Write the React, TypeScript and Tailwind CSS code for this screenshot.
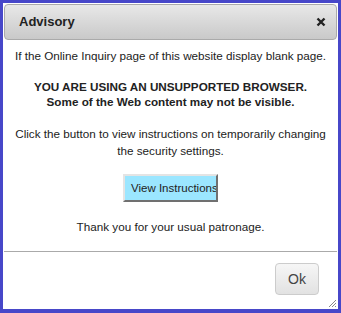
export default function App() {
  return (
    <div className="w-[341px] h-[313px] bg-white border-[#4747c9] border-t-[3px] border-l-[3px] border-r-[3px] border-b-[4px] p-px flex flex-col font-['Liberation_Sans',Arial,sans-serif] text-[#222]">
      <div className="h-[36px] shrink-0 flex items-center justify-between rounded-[4px] border border-[#aaaaaa] bg-gradient-to-b from-[#e8e8e8] to-[#c9c9c9] pl-[14px] pr-[10px]">
        <span className="text-[13px] font-bold text-[#222]">Advisory</span>
        <svg width="10" height="10" viewBox="0 0 10 10" className="text-[#222]">
          <path d="M1.5 1.5 L8.5 8.5 M8.5 1.5 L1.5 8.5" stroke="currentColor" strokeWidth="2.4" strokeLinecap="butt" />
        </svg>
      </div>
      <div className="flex-1 flex flex-col items-center text-center text-[11.7px] leading-[16px] pt-[8px]">
        <p>If the Online Inquiry page of this website display blank page.</p>
        <p className="font-bold mt-[15px] leading-[15px]">
          YOU ARE USING AN UNSUPPORTED BROWSER.
          <br />
          Some of the Web content may not be visible.
        </p>
        <p className="mt-[16px] leading-[17px]">
          Click the button to view instructions on temporarily changing
          <br />
          the security settings.
        </p>
        <button className="mt-[15px] h-[28px] w-[95px] overflow-hidden whitespace-nowrap bg-[#9be6ff] text-[11.5px] text-[#222] border-2 border-t-[#e4e4e4] border-l-[#e4e4e4] border-r-[#707070] border-b-[#707070] pl-[6px] text-left">
          View Instructions
        </button>
        <p className="mt-[17px]">Thank you for your usual patronage.</p>
      </div>
      <div className="relative h-[57px] shrink-0 border-t border-[#aaaaaa] flex items-start justify-end pt-[11px] pr-[18px]">
        <button className="h-[32px] w-[44px] rounded-[4px] border border-[#cccccc] bg-gradient-to-b from-[#f6f6f6] to-[#e2e2e2] text-[14px] text-[#444]">
          Ok
        </button>
        <svg width="8" height="8" viewBox="0 0 8 8" className="absolute right-[1px] bottom-[1px]">
          <path d="M8 1 L1 8 M8 4 L4 8 M8 7 L7 8" stroke="#888" strokeWidth="1" />
        </svg>
      </div>
    </div>
  );
}
